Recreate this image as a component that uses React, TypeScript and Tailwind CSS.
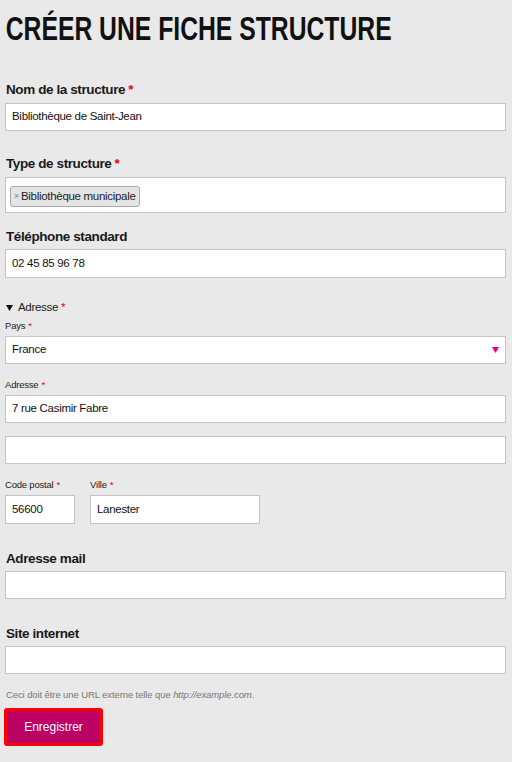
import React from "react";

const font = { fontFamily: '"Liberation Sans", Arial, sans-serif' };

function Star() {
    return <span className="text-[#e3001b] ml-[3px]">*</span>;
}

function BigLabel({ text, required, className }: { text: string; required?: boolean; className: string }) {
    return (
        <div className={"flex items-center h-[20px] text-[13.5px] tracking-[-0.4px] font-bold text-[#1a1a1a] " + className}>
            {text}
            {required && <Star />}
        </div>
    );
}

function SmallLabel({ text, className }: { text: string; className: string }) {
    return (
        <div className={"flex items-center h-[15px] text-[9.5px] tracking-[-0.2px] text-[#222] " + className}>
            {text}
            <Star />
        </div>
    );
}

function Field({ value, className }: { value?: string; className: string }) {
    return (
        <div className={"flex items-center bg-white border border-[#c4c4c4] px-[6px] text-[11.5px] tracking-[-0.3px] text-[#111] " + className}>
            {value}
        </div>
    );
}

export default function App() {
    return (
        <div className="bg-[#e9e9e9] min-h-[762px] pl-[5px] pr-[6px] flex flex-col" style={font}>
            <h1 className="h-[56px] pt-[8px] pl-[1px] text-[34px] leading-[40px] font-bold text-[#111] whitespace-nowrap origin-left scale-x-[0.727]">
                CRÉER UNE FICHE STRUCTURE
            </h1>

            <BigLabel text="Nom de la structure" required className="mt-[24px] pl-[1px]" />
            <Field value="Bibliothèque de Saint-Jean" className="mt-[3px] h-[28px]" />

            <BigLabel text="Type de structure" required className="mt-[23px] pl-[1px]" />
            <div className="mt-[3px] h-[36px] bg-white border border-[#c4c4c4] px-[4px] pt-[4px]">
                <span className="inline-flex items-center h-[21px] px-[3px] bg-[#e4e4e4] border border-[#aaa] rounded-[3px] text-[11.5px] tracking-[-0.3px] text-[#222]">
                    <span className="text-[#888] text-[9px] mr-[2px]">×</span>
                    Bibliothèque municipale
                </span>
            </div>

            <BigLabel text="Téléphone standard" className="mt-[14px] pl-[1px]" />
            <Field value="02 45 85 96 78" className="mt-[2px] h-[29px]" />

            <div className="mt-[21px] h-[18px] flex items-center pl-[1px] text-[11.5px] tracking-[-0.3px] text-[#222]">
                <svg width="7" height="6" viewBox="0 0 7 6" className="mr-[5px]">
                    <path d="M0 0 H7 L3.5 6 Z" fill="#111" />
                </svg>
                Adresse
                <Star />
            </div>

            <SmallLabel text="Pays" className="mt-[2px]" />
            <div className="mt-[2px] h-[28px] flex items-center justify-between bg-white border border-[#c4c4c4] pl-[6px] pr-[6px] text-[11.5px] tracking-[-0.3px] text-[#111]">
                France
                <svg width="7" height="6" viewBox="0 0 7 6">
                    <path d="M0 0 H7 L3.5 6 Z" fill="#e5007e" />
                </svg>
            </div>

            <SmallLabel text="Adresse" className="mt-[14px]" />
            <Field value="7 rue Casimir Fabre" className="mt-[2px] h-[28px]" />
            <Field className="mt-[13px] h-[28px]" />

            <div className="mt-[14px] flex gap-[15px]">
                <div className="flex flex-col">
                    <SmallLabel text="Code postal" className="" />
                    <Field value="56600" className="mt-[2px] h-[29px] w-[70px]" />
                </div>
                <div className="flex flex-col">
                    <SmallLabel text="Ville" className="" />
                    <Field value="Lanester" className="mt-[2px] h-[29px] w-[170px]" />
                </div>
            </div>

            <BigLabel text="Adresse mail" className="mt-[25px] pl-[1px]" />
            <Field className="mt-[2px] h-[28px]" />

            <BigLabel text="Site internet" className="mt-[25px] pl-[1px]" />
            <Field className="mt-[2px] h-[28px]" />

            <div className="mt-[14px] h-[14px] flex items-center pl-[1px] text-[9.5px] tracking-[-0.1px] text-[#777]">
                Ceci doit être une URL externe telle que&nbsp;<em>http://example.com</em>.
            </div>

            <div className="mt-[6px]">
                <button className="h-[38px] w-[99px] -ml-[1px] border-[3px] border-[#ff0000] rounded-[3px] bg-[#bb0066] text-white text-[12px]">
                    Enregistrer
                </button>
            </div>
        </div>
    );
}
